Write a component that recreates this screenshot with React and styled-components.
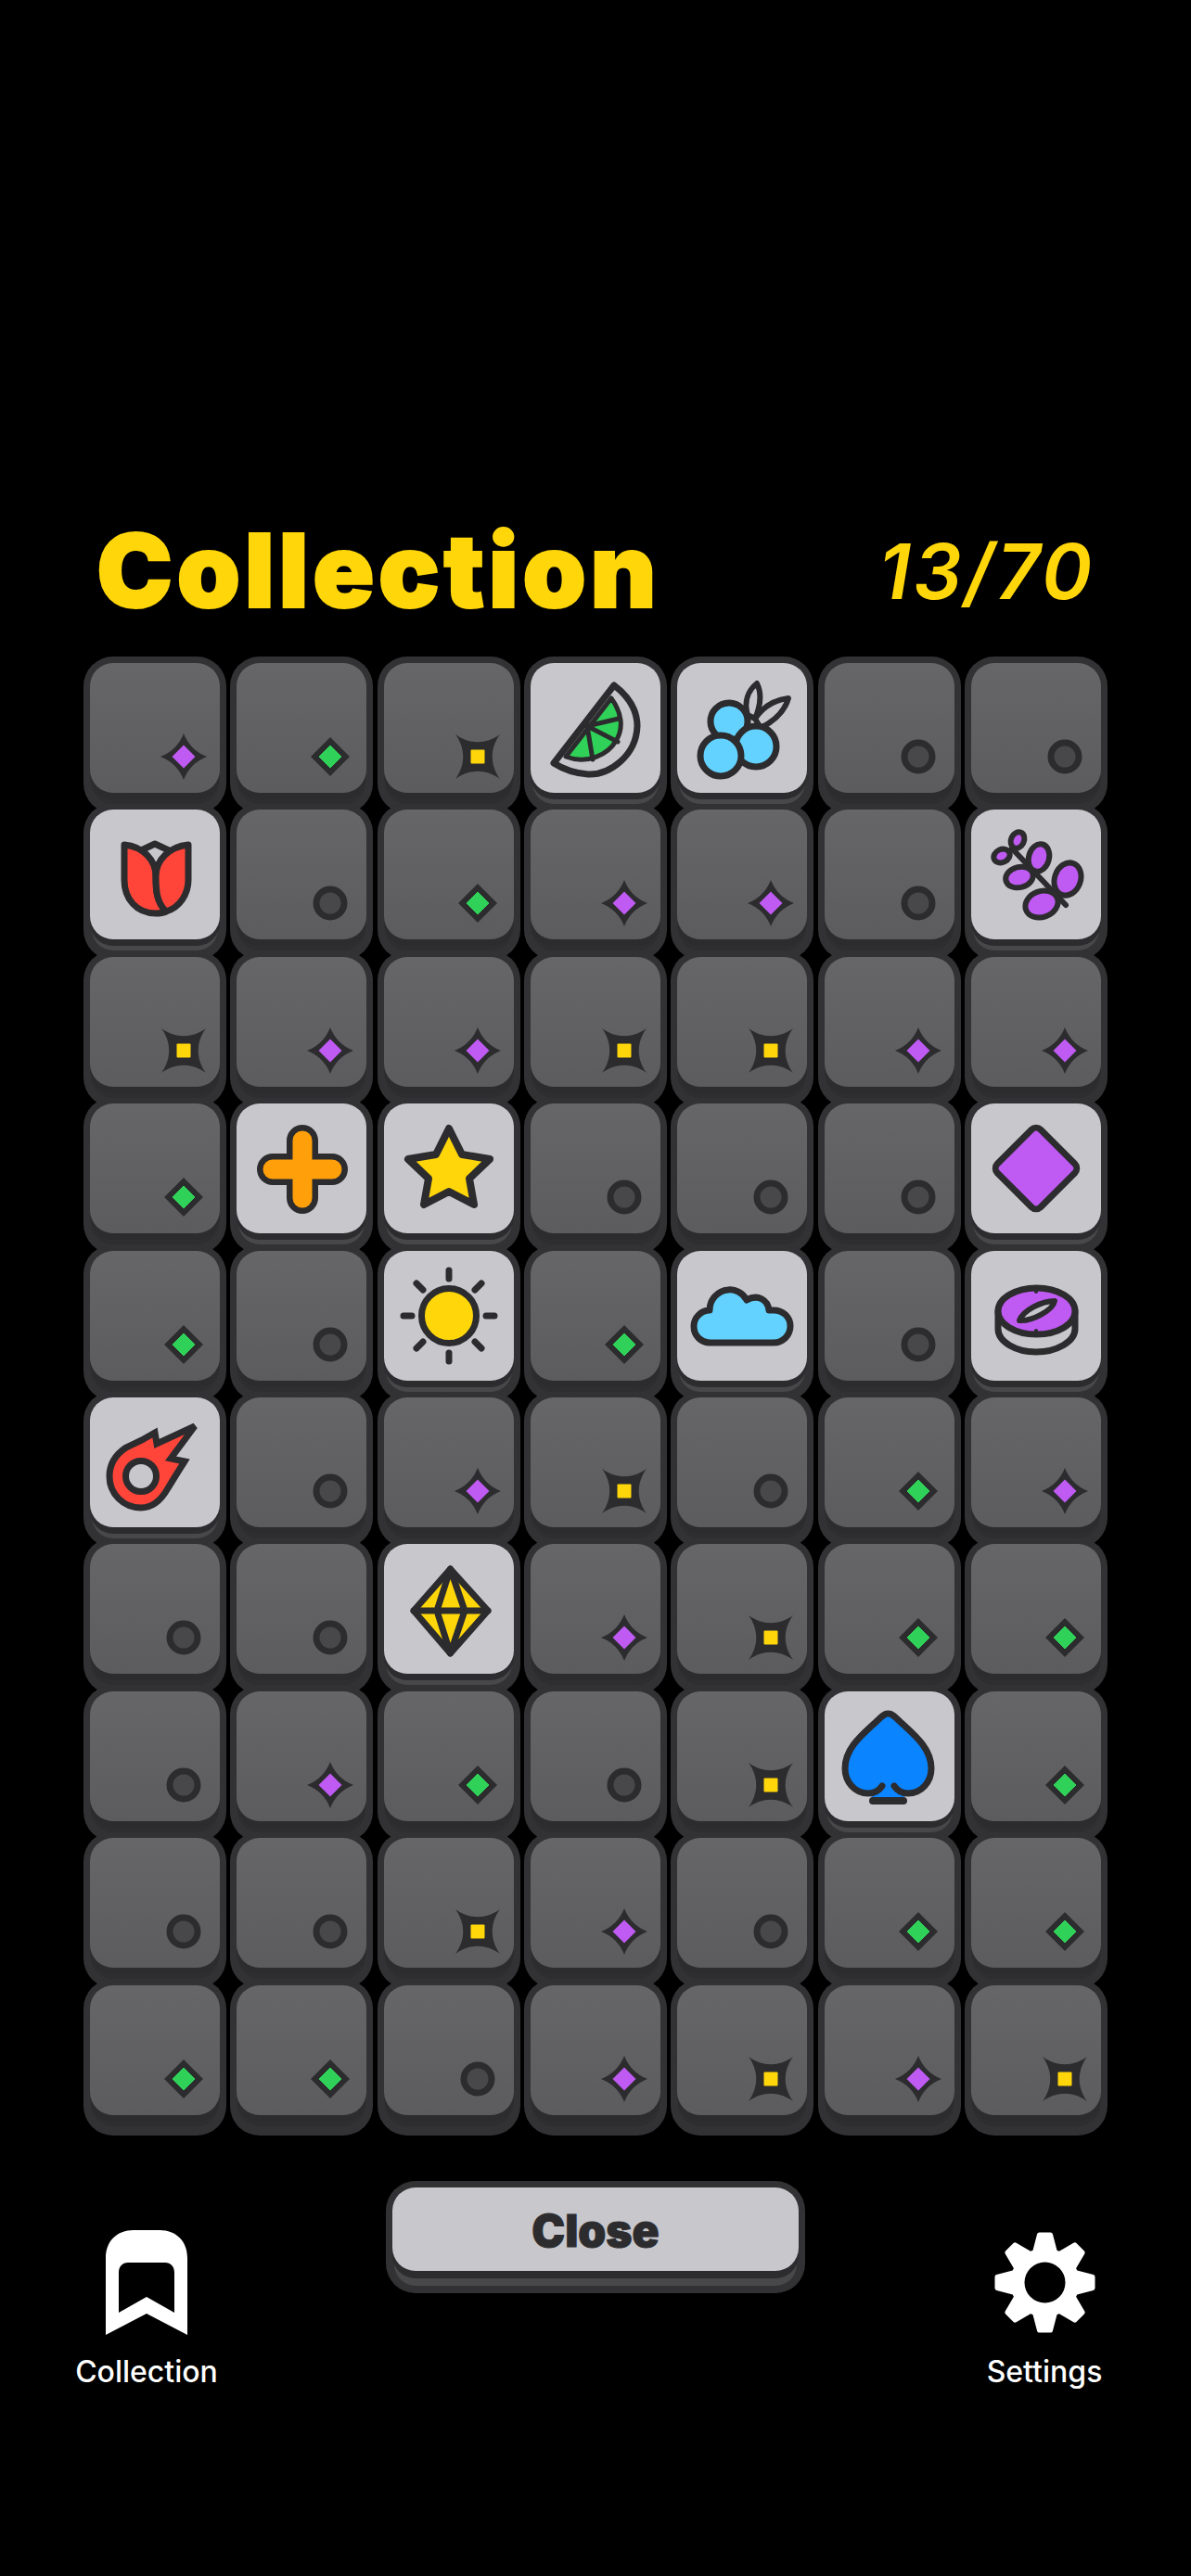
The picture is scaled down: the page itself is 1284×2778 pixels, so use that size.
import React from 'react';
import styled, { createGlobalStyle } from 'styled-components';

const DARK = '#2c2c2e';
const FACE = '#c7c7cc';

const GlobalStyle = createGlobalStyle`
  html, body {
    margin: 0;
    padding: 0;
    background: #000;
    font-family: Inter, "Liberation Sans", sans-serif;
  }
`;

const Page = styled.div`
  width: 1284px;
  height: 2778px;
  box-sizing: border-box;
  padding-top: 560px;
  background: #000;
  overflow: hidden;
`;

const Header = styled.header`
  display: flex;
  justify-content: space-between;
  align-items: center;
  height: 110px;
  padding: 0 104px 0 104px;
  margin-bottom: 38px;
  color: #ffd60a;
`;

const Title = styled.h1`
  margin: 0;
  font-size: 110px;
  line-height: 110px;
  font-weight: 900;
  letter-spacing: 4.2px;
  -webkit-text-stroke: 2px #ffd60a;
`;

const Count = styled.div`
  padding-top: 4px;
  font-size: 82px;
  line-height: 106px;
  font-weight: 600;
  font-style: italic;
  letter-spacing: 3px;
`;

const Grid = styled.div`
  display: grid;
  grid-template-columns: repeat(7, 154px);
  grid-auto-rows: 158.4px;
  column-gap: 4.4px;
  justify-content: center;
`;

const Tile = styled.div`
  height: 169px;
  box-sizing: border-box;
  padding: 7px 7px 0;
  background: #323234;
  border-radius: 32px;
`;

const Face = styled.div`
  position: relative;
  width: 140px;
  height: 140px;
  border-radius: 25px;
  background: ${p => (p.$lit ? FACE : 'linear-gradient(#666668, #5c5c5e)')};
  box-shadow: ${p =>
    p.$lit
      ? `0 7px 0 0 ${DARK}, 0 14px 0 -2px #48484a`
      : `0 7px 0 0 ${DARK}, 0 13px 0 -1px #2e2e30`};
`;

const Marker = styled.svg`
  position: absolute;
  left: 76px;
  top: 76px;
  width: 50px;
  height: 50px;
`;

const Art = styled.svg`
  display: block;
  width: 140px;
  height: 140px;
  fill: none;
  stroke: ${DARK};
  stroke-width: 7;
  stroke-linejoin: round;
  stroke-linecap: round;
`;

const Bottom = styled.div`
  display: flex;
  justify-content: space-between;
  align-items: flex-start;
  margin-top: 60px;
  padding: 0 58px;
`;

const NavItem = styled.div`
  width: 200px;
  padding-top: 53px;
  display: flex;
  flex-direction: column;
  align-items: center;
  color: #fff;
`;

const NavIcon = styled.svg`
  display: block;
  height: 113px;
`;

const NavLabel = styled.div`
  margin-top: 22px;
  font-size: 32px;
  line-height: 36px;
  font-weight: 500;
`;

const CloseButton = styled.button`
  width: 452px;
  height: 121px;
  box-sizing: border-box;
  padding: 7px 7px 0;
  border: 0;
  border-radius: 32px;
  background: #323234;
  display: flex;
  flex-direction: column;
  justify-content: flex-start;
  align-items: stretch;
`;

const CloseFace = styled.div`
  height: 90px;
  box-sizing: border-box;
  padding-top: 4px;
  border-radius: 25px;
  background: ${FACE};
  box-shadow: 0 8px 0 0 ${DARK}, 0 18px 0 -2px #48484a;
  display: flex;
  align-items: center;
  justify-content: center;
  color: ${DARK};
  font-family: Inter, "Liberation Sans", sans-serif;
  font-size: 48px;
  font-weight: 900;
  -webkit-text-stroke: 1px ${DARK};
`;

const Circle = () => (
  <Marker viewBox="0 0 50 50">
    <circle cx="25" cy="25" r="15" fill="#48484a" stroke={DARK} strokeWidth="7" />
  </Marker>
);

const Green = () => (
  <Marker viewBox="0 0 50 50">
    <path d="M25 4 L46 25 L25 46 L4 25 Z" fill={DARK} />
    <path d="M25 13 L37 25 L25 37 L13 25 Z" fill="#30d158" stroke="#30d158" strokeWidth="1" strokeLinejoin="round" />
  </Marker>
);

const Purple = () => (
  <Marker viewBox="0 0 50 50">
    <path d="M25 0 Q32 18 50 25 Q32 32 25 50 Q18 32 0 25 Q18 18 25 0 Z" fill={DARK} />
    <path d="M25 12.5 L37.5 25 L25 37.5 L12.5 25 Z" fill="#bf5af2" />
  </Marker>
);

const Yellow = () => (
  <Marker viewBox="0 0 50 50">
    <path d="M1 1 C16 12 34 12 49 1 C38 16 38 34 49 49 C34 38 16 38 1 49 C12 34 12 16 1 1 Z" fill={DARK} />
    <rect x="17.5" y="17.5" width="15" height="15" rx="1" fill="#ffd60a" />
  </Marker>
);

const Lime = () => (
  <Art viewBox="0 0 140 140">
    <path d="M90 24 C107 37 115 52 115 68 C114 100 85 121 62 120 C48 119 36 115 25 108 Z" fill={FACE} />
    <path d="M87 38 C98 53 101 70 92 84 C84 98 62 110 38 101 Z" fill="#30d158" strokeWidth="5" />
    <path d="M61 68 L95 60 M61 68 L94 85 M61 68 L67 104" strokeWidth="5" />
  </Art>
);

const Berry = () => (
  <Art viewBox="0 0 140 140">
    <path d="M76 56 C72 42 76 30 86 22 C92 34 90 46 84 60 Z" fill={FACE} strokeWidth="6" />
    <path d="M84 60 C92 48 104 40 120 38 C116 52 106 62 90 70 Z" fill={FACE} strokeWidth="6" />
    <circle cx="56" cy="63" r="20" fill="#64d2ff" />
    <circle cx="85" cy="90" r="22" fill="#64d2ff" />
    <circle cx="47" cy="100" r="22" fill="#64d2ff" />
  </Art>
);

const Tulip = () => (
  <Art viewBox="0 0 140 140">
    <path d="M53 45 L70 37 L87 45 L71 62 Z" fill={FACE} />
    <path d="M37 38 C57 40 71 54 71 72 C71 88 72 100 82 110 C78 112 74 112 71 112 C50 112 37 96 37 76 Z" fill="#ff453a" />
    <path d="M106 38 C86 40 71 54 71 72 C71 88 72 100 82 110 C96 106 106 92 106 76 Z" fill="#ff453a" />
  </Art>
);

const Lavender = () => (
  <Art viewBox="0 0 140 140">
    <g strokeWidth="6" fill="#bf5af2">
      <path d="M44 42 L102 103" fill="none" />
      <ellipse cx="50" cy="33" rx="7" ry="9" transform="rotate(25 50 33)" />
      <ellipse cx="33" cy="50" rx="9" ry="7" transform="rotate(-25 33 50)" />
      <ellipse cx="73" cy="52" rx="11" ry="15" transform="rotate(15 73 52)" />
      <ellipse cx="52" cy="73" rx="15" ry="11" transform="rotate(-15 52 73)" />
      <ellipse cx="104" cy="75" rx="14" ry="18" transform="rotate(20 104 75)" />
      <ellipse cx="76" cy="102" rx="18" ry="14" transform="rotate(-20 76 102)" />
    </g>
  </Art>
);

const Plus = () => (
  <Art viewBox="0 0 140 140">
    <path d="M71 40 V102 M39 71 H103" strokeWidth="34" />
    <path d="M71 40 V102 M39 71 H103" strokeWidth="21" stroke="#ff9f0a" />
  </Art>
);

const Star = () => (
  <Art viewBox="0 0 140 140">
    <path d="M70 27 L84 55 L114 60 L92 81 L97 109 L70 95 L43 109 L48 81 L26 60 L56 55 Z" fill="#ffd60a" strokeWidth="8" />
  </Art>
);

const Diamond = () => (
  <Art viewBox="0 0 140 140">
    <rect x="37" y="37" width="66" height="66" rx="7" fill="#bf5af2" transform="rotate(45 70 70)" />
  </Art>
);

const Sun = () => (
  <Art viewBox="0 0 140 140">
    <circle cx="70" cy="70" r="29.5" fill="#ffd60a" />
    <path d="M70 21 V30 M70 110 V119 M21 70 H30 M110 70 H119 M35 35 L42 42 M105 35 L98 42 M35 105 L42 98 M105 105 L98 98" />
  </Art>
);

const Cloud = () => (
  <Art viewBox="0 0 140 140">
    <path d="M36 99 H104 C114 99 122 91 122 81 C122 71 114 64 104 64 C101 64 100 64 99 64 C98 53 87 46 75 53 C71 45 62 41 55 42 C44 43 35 52 35 64 C26 64 18 72 18 81 C18 92 26 99 36 99 Z" fill="#64d2ff" />
  </Art>
);

const Compass = () => (
  <Art viewBox="0 0 140 140">
    <path d="M29 65 V84 C29 98 48 109 70 109 C92 109 112 98 112 84 V65" fill={FACE} />
    <ellipse cx="70.5" cy="65" rx="41.5" ry="25" fill="#bf5af2" />
    <path d="M52 75 C56 64 76 54 90 54 C88 64 66 76 52 75 Z" fill={FACE} strokeWidth="6" />
    <path d="M70 41 V44 M70 86 V89" strokeWidth="4" />
  </Art>
);

const Comet = () => (
  <Art viewBox="0 0 140 140">
    <path d="M113 31 L87 66 L102 69 C95 80 90 88 84 98 C76 112 66 119 55 119 C36 119 21 104 21 85 C21 70 30 60 39 54 L56 46 L70 38 L72 50 Z" fill="#ff453a" strokeLinejoin="miter" />
    <circle cx="55" cy="85" r="16.5" fill={FACE} />
  </Art>
);

const Gem = () => (
  <Art viewBox="0 0 140 140">
    <path d="M71.5 27 L112 72 L71.5 118 L32 72 Z" fill="#ffd60a" />
    <path d="M32 72 H112 M71.5 27 L57 72 L71.5 118 L87 72 Z" />
  </Art>
);

const Spade = () => (
  <Art viewBox="0 0 140 140">
    <path d="M68.5 24 C74 24 77 29 85 36 C97 47 115 62 115 83 C115 98 104 110 90 110 L84 116 H53 L47 110 C33 110 22 98 22 83 C22 62 40 47 52 36 C60 29 63 24 68.5 24 Z" fill="#0a84ff" stroke="none" />
    <path d="M62 102 C58 108 52 110 47 110 C33 110 22 98 22 83 C22 62 40 47 52 36 C60 29 63 24 68.5 24 C74 24 77 29 85 36 C97 47 115 62 115 83 C115 98 104 110 90 110 C85 110 79 108 75 102" />
    <path d="M52 118 H85" strokeWidth="8" />
  </Art>
);

const PARTS = {
  c: Circle, g: Green, p: Purple, y: Yellow,
};

const ICONS = {
  lime: Lime, berry: Berry, tulip: Tulip, lavender: Lavender, plus: Plus, star: Star,
  diamond: Diamond, sun: Sun, cloud: Cloud, compass: Compass, comet: Comet, gem: Gem, spade: Spade,
};

const CELLS = [
  'p', 'g', 'y', 'lime', 'berry', 'c', 'c',
  'tulip', 'c', 'g', 'p', 'p', 'c', 'lavender',
  'y', 'p', 'p', 'y', 'y', 'p', 'p',
  'g', 'plus', 'star', 'c', 'c', 'c', 'diamond',
  'g', 'c', 'sun', 'g', 'cloud', 'c', 'compass',
  'comet', 'c', 'p', 'y', 'c', 'g', 'p',
  'c', 'c', 'gem', 'p', 'y', 'g', 'g',
  'c', 'p', 'g', 'c', 'y', 'spade', 'g',
  'c', 'c', 'y', 'p', 'c', 'g', 'g',
  'g', 'g', 'c', 'p', 'y', 'p', 'y',
];

function Gear() {
  const teeth = [0, 45, 90, 135, 180, 225, 270, 315];
  return (
    <NavIcon viewBox="0 -2 109 113" width="109">
      <circle cx="54.5" cy="54.5" r="37" fill="#fff" />
      {teeth.map(a => (
        <path
          key={a}
          d="M42 28 L48.5 3 H60.5 L67 28 Z"
          fill="#fff"
          stroke="#fff"
          strokeWidth="5"
          strokeLinejoin="round"
          transform={`rotate(${a} 54.5 54.5)`}
        />
      ))}
      <circle cx="54.5" cy="54.5" r="22" fill="#000" />
    </NavIcon>
  );
}

function Bookmark() {
  return (
    <NavIcon viewBox="0 0 88 113" width="88">
      <path
        fillRule="evenodd"
        fill="#fff"
        d="M0 113 V30 C0 12 12 0 30 0 H58 C76 0 88 12 88 30 V113 L44 90 Z M14 89 L44 72 L74 89 V46 C74 39 70 35 64 35 H24 C18 35 14 39 14 46 Z"
      />
    </NavIcon>
  );
}

function Cell({ kind }) {
  const Icon = ICONS[kind];
  const Mark = PARTS[kind];
  return (
    <Tile>
      <Face $lit={!!Icon}>
        {Icon ? <Icon /> : <Mark />}
      </Face>
    </Tile>
  );
}

export default function App() {
  return (
    <Page>
      <GlobalStyle />
      <Header>
        <Title>Collection</Title>
        <Count>13/70</Count>
      </Header>
      <Grid>
        {CELLS.map((kind, i) => (
          <Cell key={i} kind={kind} />
        ))}
      </Grid>
      <Bottom>
        <NavItem>
          <Bookmark />
          <NavLabel>Collection</NavLabel>
        </NavItem>
        <CloseButton>
          <CloseFace>Close</CloseFace>
        </CloseButton>
        <NavItem>
          <Gear />
          <NavLabel>Settings</NavLabel>
        </NavItem>
      </Bottom>
    </Page>
  );
}
